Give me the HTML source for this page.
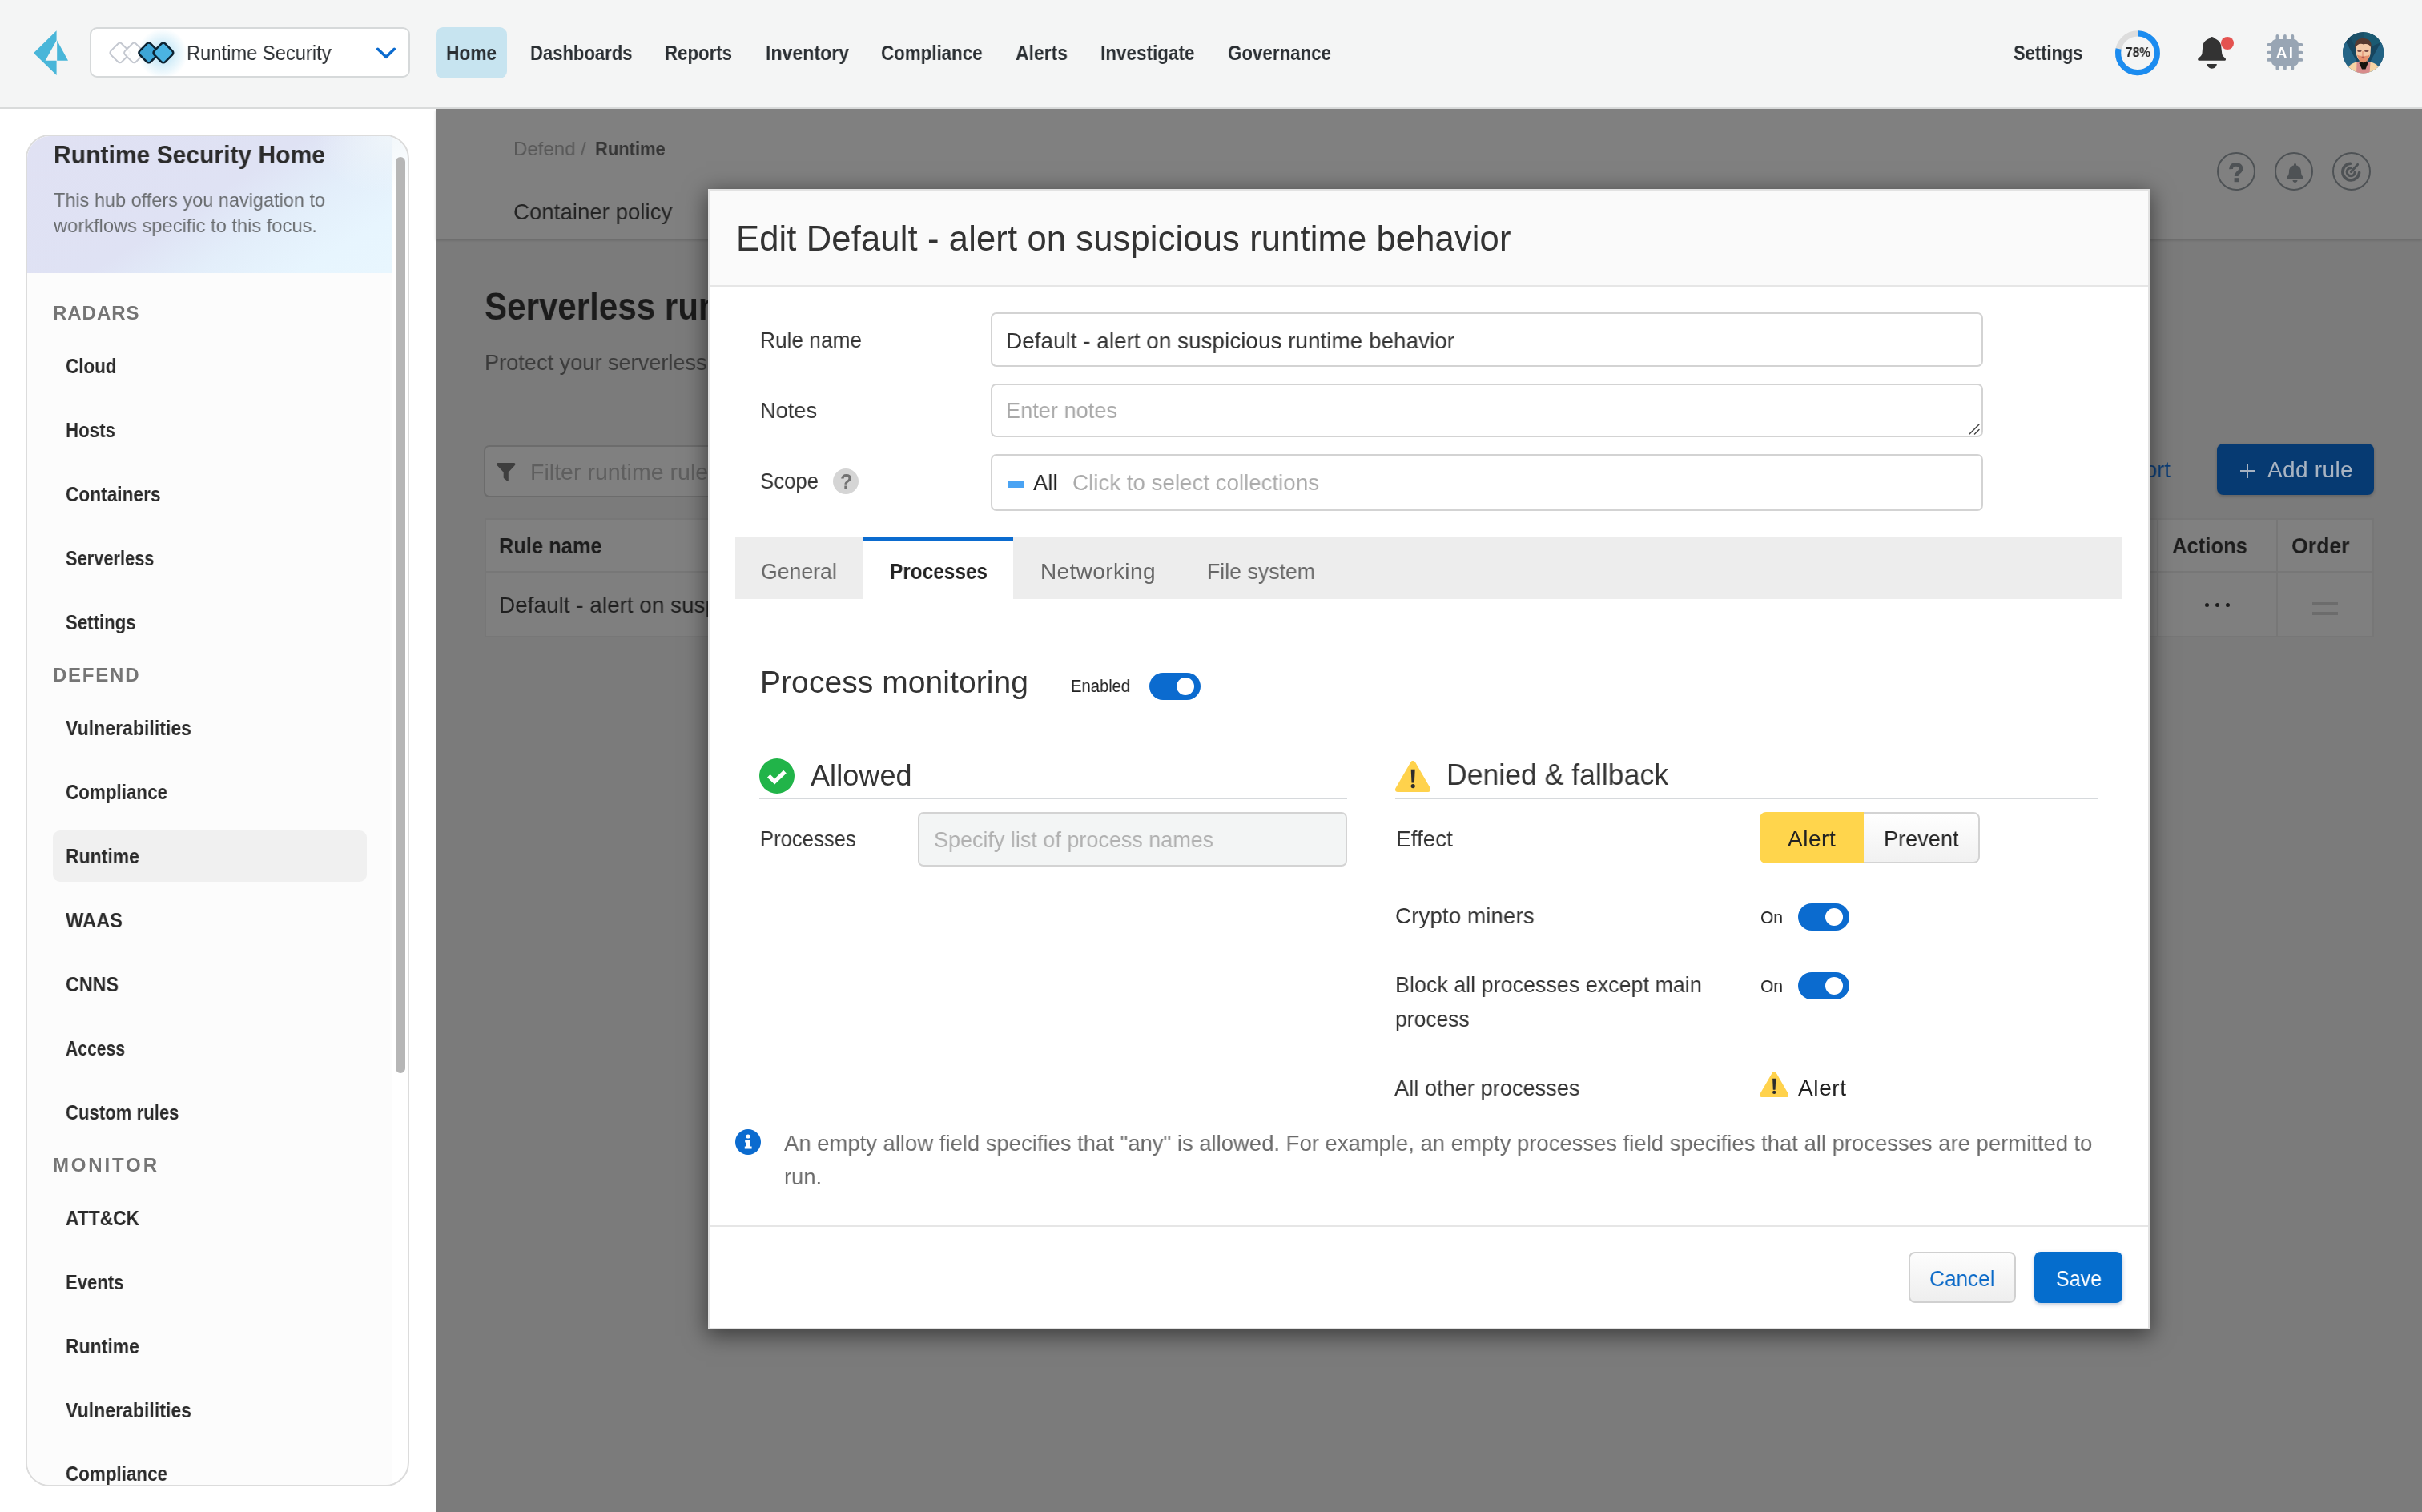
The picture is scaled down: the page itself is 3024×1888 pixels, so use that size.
<!DOCTYPE html>
<html lang="en"><head><meta charset="utf-8"><title>Prisma Cloud - Runtime rule</title>
<style>
html,body{margin:0;padding:0;}
body{width:3024px;height:1888px;overflow:hidden;background:#fff;position:relative;font-family:"Liberation Sans",sans-serif;color:#333;}
.t{position:absolute;white-space:nowrap;display:block;transform-origin:0 0;will-change:transform;}
*{box-sizing:border-box;}
</style></head><body>
<div style="position:absolute;left:0px;top:0px;width:3024px;height:136px;background:#f4f5f5;border-bottom:2px solid #d9dbdb;"></div>
<svg style="position:absolute;left:40px;top:36px;" width="48" height="60" viewBox="0 0 48 60"><polygon points="30.6,2.25 2,30.2 30.6,58.1 30.6,39.8 16.6,39.8 30.6,14.4" fill="#49b6d9"/><polygon points="31.2,14.4 45,39.8 31.2,39.8" fill="#49b6d9"/></svg>
<div style="position:absolute;left:112px;top:34px;width:400px;height:63px;background:#fff;border:2px solid #d6d9da;border-radius:9px;overflow:hidden;"><div style="position:absolute;left:40px;top:-10px;width:100px;height:80px;background:radial-gradient(circle 31px at 49px 41px, rgba(150,212,240,.75) 0%, rgba(172,221,243,.45) 50%, rgba(255,255,255,0) 100%);"></div></div>
<svg style="position:absolute;left:130px;top:46px;" width="100" height="40" viewBox="0 0 100 40"><rect x="10.0" y="10.3" width="19.4" height="19.4" rx="3.4" transform="rotate(45 19.7 20)" fill="#fff" stroke="#c4c8d0" stroke-width="2"/><rect x="27.7" y="10.3" width="19.4" height="19.4" rx="3.4" transform="rotate(45 37.4 20)" fill="rgba(255,255,255,.85)" stroke="#c4c8d0" stroke-width="2"/><rect x="46.0" y="10.3" width="19.4" height="19.4" rx="3.4" transform="rotate(45 55.7 20)" fill="#3ea5d6" stroke="#0c2231" stroke-width="2.6"/><rect x="64.2" y="10.3" width="19.4" height="19.4" rx="3.4" transform="rotate(45 73.9 20)" fill="#4bb3e2" stroke="#0c2231" stroke-width="2.6"/></svg>
<span class="t" style="left:232.50px;top:53.49px;font-size:26px;line-height:26px;color:#2b2f33;transform:scaleX(0.9117);">Runtime Security</span>
<svg style="position:absolute;left:465px;top:55px;" width="34" height="24" viewBox="0 0 34 24"><polyline points="6.7,6.3 17.1,16.3 27.3,6.3" fill="none" stroke="#0b6bcf" stroke-width="3.6" stroke-linecap="round" stroke-linejoin="round"/></svg>
<div style="position:absolute;left:544px;top:34px;width:89px;height:64px;background:#c7e4f0;border-radius:9px;"></div>
<span class="t" style="left:557.00px;top:53.29px;font-size:26px;line-height:26px;color:#2a2f33;font-weight:700;transform:scaleX(0.8724);">Home</span>
<span class="t" style="left:661.50px;top:53.29px;font-size:26px;line-height:26px;color:#2a2f33;font-weight:700;transform:scaleX(0.8484);">Dashboards</span>
<span class="t" style="left:830.00px;top:53.29px;font-size:26px;line-height:26px;color:#2a2f33;font-weight:700;transform:scaleX(0.8553);">Reports</span>
<span class="t" style="left:955.50px;top:53.29px;font-size:26px;line-height:26px;color:#2a2f33;font-weight:700;transform:scaleX(0.8889);">Inventory</span>
<span class="t" style="left:1100.00px;top:53.29px;font-size:26px;line-height:26px;color:#2a2f33;font-weight:700;transform:scaleX(0.8585);">Compliance</span>
<span class="t" style="left:1267.50px;top:53.29px;font-size:26px;line-height:26px;color:#2a2f33;font-weight:700;transform:scaleX(0.8818);">Alerts</span>
<span class="t" style="left:1374.00px;top:53.29px;font-size:26px;line-height:26px;color:#2a2f33;font-weight:700;transform:scaleX(0.8649);">Investigate</span>
<span class="t" style="left:1532.50px;top:53.29px;font-size:26px;line-height:26px;color:#2a2f33;font-weight:700;transform:scaleX(0.8584);">Governance</span>
<span class="t" style="left:2514.00px;top:53.29px;font-size:26px;line-height:26px;color:#2a2f33;font-weight:700;transform:scaleX(0.8433);">Settings</span>
<svg style="position:absolute;left:2637px;top:34px;" width="64" height="64" viewBox="0 0 64 64"><circle cx="32" cy="32.2" r="24.4" fill="none" stroke="#dddddd" stroke-width="7.2"/><circle cx="32" cy="32.2" r="24.4" fill="none" stroke="#1b8cf0" stroke-width="7.2" stroke-dasharray="118.82 153.31" transform="rotate(-88 32 32.2)"/></svg>
<span class="t" style="left:2653.50px;top:57.66px;font-size:16px;line-height:16px;color:#222;font-weight:700;transform:scaleX(0.9675);">78%</span>
<svg style="position:absolute;left:2743.5px;top:46px;" width="36" height="41" viewBox="0 0 36 41"><path d="M17.7,0 C16.4,0 15.4,0.9 14.6,1.9 C9.8,3.8 6.3,7.4 6.2,12.6 L5.5,20.6 C5.3,23.2 3.2,24.9 0.7,26.9 C-0.4,28 0.3,29.8 1.6,29.8 L33.6,29.8 C34.9,29.8 35.6,28 34.5,26.9 C32,24.9 30.4,23.2 30.2,20.6 L29.3,12.6 C29.2,7.4 25.7,3.8 20.9,1.9 C20.1,0.9 19,0 17.7,0 Z" fill="#333"/><path d="M11.6,34 L23.8,34 C23.6,37.4 21,39.7 17.7,39.7 C14.4,39.7 11.8,37.4 11.6,34 Z" fill="#333"/></svg>
<div style="position:absolute;left:2773px;top:46px;width:16px;height:16px;background:#e4524f;border-radius:50%;"></div>
<svg style="position:absolute;left:2828px;top:41px;" width="50" height="50" viewBox="0 0 50 50"><g stroke="#98a5b4" stroke-width="3.8" stroke-linecap="round"><line x1="15.4" y1="4.0" x2="15.4" y2="45.1" /><line x1="4.0" y1="15.0" x2="45.5" y2="15.0"/><line x1="24.9" y1="4.0" x2="24.9" y2="45.1" /><line x1="4.0" y1="24.6" x2="45.5" y2="24.6"/><line x1="34.3" y1="4.0" x2="34.3" y2="45.1" /><line x1="4.0" y1="33.9" x2="45.5" y2="33.9"/></g><rect x="7.9" y="7.9" width="33.9" height="33.5" rx="6" fill="#98a5b4"/></svg>
<span class="t" style="left:2842.00px;top:56.94px;font-size:18.5px;line-height:18.5px;color:#fff;font-weight:700;letter-spacing:2.500px;">AI</span>
<svg style="position:absolute;left:2925px;top:40px;" width="52" height="52" viewBox="0 0 52 52"><defs><clipPath id="avc"><circle cx="25.6" cy="25.8" r="25.6"/></clipPath></defs>
<g clip-path="url(#avc)">
<rect width="52" height="52" fill="#1d5a78"/>
<polygon points="0,8 12,0 40,0 52,8 52,16 30,42 22,42 0,16" fill="#17465f"/>
<polygon points="26,0 44,2 50,12 36,18 27,8" fill="#1a5a72"/>
<polygon points="8,4 26,0 27,8 14,16" fill="#1b5068"/>
<polygon points="0,16 4,12 17,36 8,46 0,40" fill="#246486"/>
<polygon points="52,16 48,12 35,36 44,46 52,40" fill="#226283"/>
<path d="M7,44 C11,38 19,36.5 26,36.5 C33,36.5 41,38 45,44 L45,52 L7,52 Z" fill="#f6d4a4"/>
<polygon points="17.5,38 23,36 29,36 34.5,38 33.5,52 17,52" fill="#d88c8c"/>
<polygon points="20.5,39 24,33 28,33 31.5,39 28.5,46.5 24,46.5" fill="#17130f"/>
<path d="M16.4,18 C16,11 35.4,11 35,18 L34.6,27 C34,32 30,38 25.6,38 C21.4,38 17.4,32 16.8,27 Z" fill="#f4caa8"/>
<path d="M18,28.5 C21,30.5 24,29 25.6,31.5 C27.5,29 31,30.5 33.6,28.5 C32.6,34 29.4,38.2 25.6,38.2 C22,38.2 19,34 18,28.5 Z" fill="#e6906c"/>
<path d="M15.4,20.5 C13.8,11.5 19.5,7.6 25,8 C31.5,7.6 37,11 35.4,20 C34,15.4 30.4,14.2 26,15.4 C21.4,13.8 17.4,15.6 15.4,20.5 Z" fill="#573a30"/>
<ellipse cx="20.9" cy="23.6" rx="2.7" ry="1.5" fill="#7b4a44"/><ellipse cx="29.8" cy="23.6" rx="2.7" ry="1.5" fill="#7b4a44"/>
<path d="M24.2,24 L26.4,24 L27.2,31 L23.6,31 Z" fill="#e8a384"/>
<ellipse cx="25.4" cy="31.8" rx="1.9" ry="1.4" fill="#b2584f"/>
</g></svg>
<div style="position:absolute;left:32px;top:168px;width:479px;height:1688px;border:2px solid #dcdcdc;border-radius:30px;background:#fff;overflow:hidden;"><div style="position:absolute;left:0;top:0;width:456px;height:1684px;background:#fcfcfc;"></div><div style="position:absolute;left:0;top:0;width:456px;height:171px;background:linear-gradient(148deg,#e0e1f3 0%,#dfe2f4 48%,#e3eefa 66%,#e7f5fe 84%,#e8f6fe 100%);"></div><div style="position:absolute;left:330px;top:-30px;width:150px;height:130px;background:radial-gradient(ellipse 90px 70px at 80% 25%, rgba(240,246,250,.85), rgba(240,246,250,0));"></div></div>
<div style="position:absolute;left:494px;top:196px;width:12px;height:1144px;background:#b6b6b6;border-radius:6px;"></div>
<span class="t" style="left:67.00px;top:178.18px;font-size:30.5px;line-height:30.5px;color:#2b2b2b;font-weight:700;transform:scaleX(0.9854);">Runtime Security Home</span>
<span class="t" style="left:67.00px;top:238.38px;font-size:24px;line-height:24px;color:#696c6f;transform:scaleX(0.9785);">This hub offers you navigation to</span>
<span class="t" style="left:67.06px;top:269.68px;font-size:24px;line-height:24px;color:#696c6f;transform:scaleX(0.9864);">workflows specific to this focus.</span>
<div style="position:absolute;left:66px;top:1037px;width:392px;height:64px;background:#f0f0f0;border-radius:9px;"></div>
<span class="t" style="left:66.00px;top:379.28px;font-size:24px;line-height:24px;color:#757575;font-weight:700;letter-spacing:0.968px;">RADARS</span>
<span class="t" style="left:81.50px;top:444.64px;font-size:25px;line-height:25px;color:#2a2a2a;font-weight:700;transform:scaleX(0.8967);">Cloud</span>
<span class="t" style="left:81.50px;top:524.64px;font-size:25px;line-height:25px;color:#2a2a2a;font-weight:700;transform:scaleX(0.8929);">Hosts</span>
<span class="t" style="left:81.50px;top:604.64px;font-size:25px;line-height:25px;color:#2a2a2a;font-weight:700;transform:scaleX(0.9076);">Containers</span>
<span class="t" style="left:81.50px;top:684.64px;font-size:25px;line-height:25px;color:#2a2a2a;font-weight:700;transform:scaleX(0.8735);">Serverless</span>
<span class="t" style="left:81.50px;top:764.64px;font-size:25px;line-height:25px;color:#2a2a2a;font-weight:700;transform:scaleX(0.8872);">Settings</span>
<span class="t" style="left:66.00px;top:831.28px;font-size:24px;line-height:24px;color:#757575;font-weight:700;letter-spacing:1.760px;">DEFEND</span>
<span class="t" style="left:81.50px;top:896.64px;font-size:25px;line-height:25px;color:#2a2a2a;font-weight:700;transform:scaleX(0.9239);">Vulnerabilities</span>
<span class="t" style="left:81.50px;top:976.64px;font-size:25px;line-height:25px;color:#2a2a2a;font-weight:700;transform:scaleX(0.8963);">Compliance</span>
<span class="t" style="left:81.50px;top:1056.64px;font-size:25px;line-height:25px;color:#2a2a2a;font-weight:700;transform:scaleX(0.9200);">Runtime</span>
<span class="t" style="left:81.50px;top:1136.64px;font-size:25px;line-height:25px;color:#2a2a2a;font-weight:700;transform:scaleX(0.9467);">WAAS</span>
<span class="t" style="left:81.50px;top:1216.64px;font-size:25px;line-height:25px;color:#2a2a2a;font-weight:700;transform:scaleX(0.9320);">CNNS</span>
<span class="t" style="left:81.50px;top:1296.64px;font-size:25px;line-height:25px;color:#2a2a2a;font-weight:700;transform:scaleX(0.8451);">Access</span>
<span class="t" style="left:81.50px;top:1376.64px;font-size:25px;line-height:25px;color:#2a2a2a;font-weight:700;transform:scaleX(0.8858);">Custom rules</span>
<span class="t" style="left:66.00px;top:1443.28px;font-size:24px;line-height:24px;color:#757575;font-weight:700;letter-spacing:2.847px;">MONITOR</span>
<span class="t" style="left:81.50px;top:1508.64px;font-size:25px;line-height:25px;color:#2a2a2a;font-weight:700;transform:scaleX(0.9115);">ATT&amp;CK</span>
<span class="t" style="left:81.50px;top:1588.64px;font-size:25px;line-height:25px;color:#2a2a2a;font-weight:700;transform:scaleX(0.8841);">Events</span>
<span class="t" style="left:81.50px;top:1668.64px;font-size:25px;line-height:25px;color:#2a2a2a;font-weight:700;transform:scaleX(0.9200);">Runtime</span>
<span class="t" style="left:81.50px;top:1748.64px;font-size:25px;line-height:25px;color:#2a2a2a;font-weight:700;transform:scaleX(0.9239);">Vulnerabilities</span>
<div style="position:absolute;left:34px;top:1800px;width:456px;height:54px;overflow:hidden;">
<span class="t" style="left:47.50px;top:27.64px;font-size:25px;line-height:25px;color:#2a2a2a;font-weight:700;transform:scaleX(0.8963);">Compliance</span>
</div>
<div style="position:absolute;left:544px;top:136px;width:2480px;height:1752px;background:#7b7b7b;"></div>
<div style="position:absolute;left:544px;top:136px;width:2480px;height:162px;background:#808080;box-shadow:0 2px 3px rgba(0,0,0,.17);"></div>
<span class="t" style="left:641.00px;top:174.26px;font-size:24.5px;line-height:24.5px;color:#575757;transform:scaleX(0.9798);">Defend /</span>
<span class="t" style="left:742.50px;top:174.26px;font-size:24.5px;line-height:24.5px;color:#363636;font-weight:700;transform:scaleX(0.8959);">Runtime</span>
<span class="t" style="left:641.00px;top:250.80px;font-size:28px;line-height:28px;color:#232323;transform:scaleX(0.9877);">Container policy</span>
<div style="position:absolute;left:2768px;top:190px;width:48px;height:48px;border:2px solid #4e5255;border-radius:50%;"></div>
<div style="position:absolute;left:2840px;top:190px;width:48px;height:48px;border:2px solid #4e5255;border-radius:50%;"></div>
<div style="position:absolute;left:2912px;top:190px;width:48px;height:48px;border:2px solid #4e5255;border-radius:50%;"></div>
<svg style="position:absolute;left:2782.8px;top:202.8px;" width="18" height="25" viewBox="0 0 18 25"><path d="M2.6,8.2 C2.3,4 5.6,2.4 8.9,2.4 C12.6,2.4 15.2,4.4 15.2,7.6 C15.2,11.8 9.2,12 9.2,17" fill="none" stroke="#4e5255" stroke-width="4.8"/><rect x="6.6" y="19.2" width="5.4" height="5" fill="#4e5255"/></svg>
<svg style="position:absolute;left:2854.5px;top:203px;" width="21" height="26" viewBox="0 0 448 512"><path fill="#4e5255" d="M224 512c35.32 0 63.97-28.65 63.97-64H160.03c0 35.35 28.65 64 63.97 64zm215.39-149.71c-19.32-20.76-55.47-51.99-55.47-154.29 0-77.7-54.48-139.9-127.94-155.16V32c0-17.67-14.32-32-31.98-32s-31.98 14.33-31.98 32v20.84C118.56 68.1 64.08 130.3 64.08 208c0 102.3-36.15 133.53-55.47 154.29-6 6.45-8.66 14.16-8.61 21.71.11 16.4 12.98 32 32.1 32h383.8c19.12 0 32-15.6 32.1-32 .05-7.55-2.61-15.27-8.61-21.71z"/></svg>
<svg style="position:absolute;left:2920px;top:198px;" width="32" height="32" viewBox="0 0 32 32"><g fill="none" stroke="#4e5255" stroke-linecap="round"><path d="M25.6,17.6 A10.4,10.4 0 1 1 14.6,6.2" stroke-width="3.6"/><path d="M20.2,16.8 A5,5 0 1 1 15.2,11.6" stroke-width="3.2"/><line x1="15.4" y1="16.4" x2="23.6" y2="7.4" stroke-width="3"/><circle cx="15.2" cy="16.6" r="1.2" fill="#4e5255" stroke="none"/></g></svg>
<span class="t" style="left:605.40px;top:359.07px;font-size:48px;line-height:48px;color:#1b1b1b;font-weight:700;transform:scaleX(0.8774);">Serverless runtime policy</span>
<span class="t" style="left:605.40px;top:439.10px;font-size:28px;line-height:28px;color:#3b3b3b;transform:scaleX(0.9696);">Protect your serverless functions</span>
<div style="position:absolute;left:604px;top:556px;width:2000px;height:65px;border:2px solid #6c6c6c;border-radius:7px;background:#808080;"></div>
<svg style="position:absolute;left:620px;top:578px;" width="24" height="24" viewBox="0 0 24 24"><path fill="#3e3e3e" d="M0,1.6 Q0,0 1.6,0 L21.9,0 Q23.5,0 23.5,1.6 Q23.5,2.4 22.9,3.1 L14.8,11.8 L14.8,21.6 Q14.8,23.6 13.2,22.4 L9.5,19.6 Q8.7,19 8.7,18 L8.7,11.8 L0.6,3.1 Q0,2.4 0,1.6 Z"/></svg>
<span class="t" style="left:661.80px;top:575.80px;font-size:28px;line-height:28px;color:#5f5f5f;transform:scaleX(1.02);">Filter runtime rules</span>
<span class="t" style="left:2632.00px;top:573.30px;font-size:28px;line-height:28px;color:#0a3d78;transform:scaleX(0.9602);">Export</span>
<div style="position:absolute;left:2768px;top:554px;width:196px;height:64px;background:#063a72;border-radius:8px;box-shadow:0 2px 4px rgba(0,0,0,.2);"></div>
<div style="position:absolute;left:2797px;top:586.7px;width:18.2px;height:2.4px;background:#a7b2c1;"></div>
<div style="position:absolute;left:2804.9px;top:578.8px;width:2.4px;height:18.2px;background:#a7b2c1;"></div>
<span class="t" style="left:2830.50px;top:573.30px;font-size:28px;line-height:28px;color:#a9b4c2;letter-spacing:0.314px;">Add rule</span>
<div style="position:absolute;left:605px;top:647px;width:2359px;height:149px;border:2px solid #777777;background:#7f7f7f;"></div>
<div style="position:absolute;left:605px;top:647px;width:2359px;height:68px;border:2px solid #777777;background:#808080;"></div>
<div style="position:absolute;left:2693px;top:647px;width:2px;height:149px;background:#777777;"></div>
<div style="position:absolute;left:2842px;top:647px;width:2px;height:149px;background:#777777;"></div>
<span class="t" style="left:623.00px;top:668.10px;font-size:28px;line-height:28px;color:#1c1c1c;font-weight:700;transform:scaleX(0.9081);">Rule name</span>
<span class="t" style="left:623.00px;top:741.70px;font-size:28px;line-height:28px;color:#1f1f1f;transform:scaleX(.997);">Default - alert on suspicious runtime behavior</span>
<span class="t" style="left:2712.00px;top:667.80px;font-size:28px;line-height:28px;color:#1c1c1c;font-weight:700;transform:scaleX(0.9154);">Actions</span>
<span class="t" style="left:2860.50px;top:667.80px;font-size:28px;line-height:28px;color:#1c1c1c;font-weight:700;transform:scaleX(0.9511);">Order</span>
<div style="position:absolute;left:2752.5px;top:752.5px;width:5px;height:5px;background:#1c1c1c;border-radius:50%;"></div>
<div style="position:absolute;left:2765.5px;top:752.5px;width:5px;height:5px;background:#1c1c1c;border-radius:50%;"></div>
<div style="position:absolute;left:2778.5px;top:752.5px;width:5px;height:5px;background:#1c1c1c;border-radius:50%;"></div>
<div style="position:absolute;left:2887px;top:752.2px;width:32px;height:4.2px;background:#6c6c6c;"></div>
<div style="position:absolute;left:2887px;top:764.1px;width:32px;height:4.2px;background:#6c6c6c;"></div>
<div style="position:absolute;left:884px;top:236px;width:1800px;height:1424px;background:#fff;border:2px solid #e2e2e2;box-shadow:0 6px 26px 2px rgba(0,0,0,.5);"></div>
<div style="position:absolute;left:886px;top:238px;width:1796px;height:120px;background:#fafafa;border-bottom:2px solid #e6e6e6;"></div>
<span class="t" style="left:919.00px;top:277.18px;font-size:43.5px;line-height:43.5px;color:#333;letter-spacing:0.151px;">Edit Default - alert on suspicious runtime behavior</span>
<span class="t" style="left:949.00px;top:410.90px;font-size:28px;line-height:28px;color:#333;transform:scaleX(0.9381);">Rule name</span>
<div style="position:absolute;left:1237px;top:390px;width:1239px;height:68px;background:#fff;border:2px solid #d3d3d3;border-radius:7px;"></div>
<span class="t" style="left:1256.00px;top:411.70px;font-size:28px;line-height:28px;color:#333;transform:scaleX(0.9968);">Default - alert on suspicious runtime behavior</span>
<span class="t" style="left:949.00px;top:498.70px;font-size:28px;line-height:28px;color:#333;transform:scaleX(0.9706);">Notes</span>
<div style="position:absolute;left:1237px;top:478.5px;width:1239px;height:67.5px;background:#fff;border:2px solid #d3d3d3;border-radius:7px;"></div>
<span class="t" style="left:1256.00px;top:499.10px;font-size:28px;line-height:28px;color:#a9a9a9;transform:scaleX(0.9705);">Enter notes</span>
<svg style="position:absolute;left:2457.1px;top:527.7px;" width="16" height="16" viewBox="0 0 16 16"><g stroke="#444" stroke-width="1.5" stroke-linecap="round"><line x1="2" y1="14" x2="14" y2="2"/><line x1="8.5" y1="14" x2="14" y2="8.5"/></g></svg>
<span class="t" style="left:949.00px;top:587.30px;font-size:28px;line-height:28px;color:#333;transform:scaleX(0.9196);">Scope</span>
<div style="position:absolute;left:1039.5px;top:585px;width:32px;height:32px;background:#d5d5d5;border-radius:50%;"></div>
<span class="t" style="left:1049.20px;top:589.04px;font-size:25px;line-height:25px;color:#727272;font-weight:700;">?</span>
<div style="position:absolute;left:1237px;top:566.5px;width:1239px;height:71px;background:#fff;border:2px solid #d3d3d3;border-radius:7px;"></div>
<div style="position:absolute;left:1259px;top:599.5px;width:20px;height:9.5px;background:#4aa3f3;"></div>
<span class="t" style="left:1289.50px;top:589.30px;font-size:28px;line-height:28px;color:#222;transform:scaleX(0.9791);">All</span>
<span class="t" style="left:1339.00px;top:589.30px;font-size:28px;line-height:28px;color:#ababab;transform:scaleX(0.9897);">Click to select collections</span>
<div style="position:absolute;left:918px;top:669.5px;width:1732px;height:78.5px;background:#ededed;"></div>
<div style="position:absolute;left:1078px;top:669.5px;width:187px;height:78.5px;background:#fff;border-top:5.5px solid #0b6bcf;"></div>
<span class="t" style="left:950.20px;top:700.10px;font-size:28px;line-height:28px;color:#666;transform:scaleX(0.9517);">General</span>
<span class="t" style="left:1111.00px;top:700.10px;font-size:28px;line-height:28px;color:#222;font-weight:700;transform:scaleX(0.8706);">Processes</span>
<span class="t" style="left:1298.50px;top:700.10px;font-size:28px;line-height:28px;color:#666;letter-spacing:0.381px;">Networking</span>
<span class="t" style="left:1507.00px;top:700.10px;font-size:28px;line-height:28px;color:#666;transform:scaleX(0.9533);">File system</span>
<span class="t" style="left:948.80px;top:831.99px;font-size:39px;line-height:39px;color:#333;letter-spacing:0.062px;">Process monitoring</span>
<span class="t" style="left:1336.50px;top:846.08px;font-size:22px;line-height:22px;color:#222;transform:scaleX(0.9165);">Enabled</span>
<div style="position:absolute;left:1435px;top:840px;width:64px;height:34px;background:#0b6bcf;border-radius:17px;"></div>
<div style="position:absolute;left:1468.9px;top:845.7px;width:22.6px;height:22.6px;background:#fff;border-radius:50%;"></div>
<svg style="position:absolute;left:948px;top:947px;" width="44" height="44" viewBox="0 0 44 44"><circle cx="22" cy="22" r="22" fill="#21b449"/><polyline points="11.8,21.8 19.2,29 32,16.6" fill="none" stroke="#fff" stroke-width="5.2" stroke-linejoin="miter"/></svg>
<span class="t" style="left:1012.00px;top:950.53px;font-size:36px;line-height:36px;color:#333;letter-spacing:0.085px;">Allowed</span>
<div style="position:absolute;left:948px;top:996px;width:734px;height:2px;background:#d6d9dc;"></div>
<span class="t" style="left:949.00px;top:1034.30px;font-size:28px;line-height:28px;color:#333;transform:scaleX(0.9151);">Processes</span>
<div style="position:absolute;left:1146px;top:1014px;width:536px;height:68px;background:#f3f5f5;border:2px solid #d3d3d3;border-radius:7px;"></div>
<span class="t" style="left:1165.50px;top:1034.80px;font-size:28px;line-height:28px;color:#b0b0b0;transform:scaleX(0.9630);">Specify list of process names</span>
<svg style="position:absolute;left:1742px;top:949.7px;" width="44.4" height="39.0" viewBox="0 0 44.4 39"><polygon points="22.2,3.2 41.2,35.8 3.2,35.8" fill="#ffd24c" stroke="#ffd24c" stroke-width="6.4" stroke-linejoin="round"/><path d="M19.7,10.8 H24.7 L23.9,27.6 H20.5 Z" fill="#2d2d2d"/><circle cx="22.2" cy="31.6" r="2.6" fill="#2d2d2d"/></svg>
<span class="t" style="left:1806.30px;top:950.03px;font-size:36px;line-height:36px;color:#333;transform:scaleX(0.9887);">Denied &amp; fallback</span>
<div style="position:absolute;left:1742px;top:996px;width:878px;height:2px;background:#d6d9dc;"></div>
<span class="t" style="left:1742.60px;top:1033.90px;font-size:28px;line-height:28px;color:#333;transform:scaleX(0.9965);">Effect</span>
<div style="position:absolute;left:2197px;top:1014px;width:131px;height:64px;background:#ffd54c;border-radius:8px 0 0 8px;"></div>
<div style="position:absolute;left:2327px;top:1014px;width:145px;height:64px;background:linear-gradient(#fff,#f1f1f1);border:2px solid #d3d3d3;border-left:none;border-radius:0 8px 8px 0;"></div>
<span class="t" style="left:2232.00px;top:1034.00px;font-size:28px;line-height:28px;color:#222;letter-spacing:0.540px;">Alert</span>
<span class="t" style="left:2351.50px;top:1034.00px;font-size:28px;line-height:28px;color:#222;transform:scaleX(0.9686);">Prevent</span>
<span class="t" style="left:1741.80px;top:1130.30px;font-size:28px;line-height:28px;color:#333;transform:scaleX(0.9966);">Crypto miners</span>
<span class="t" style="left:2197.50px;top:1134.68px;font-size:22px;line-height:22px;color:#222;transform:scaleX(0.9568);">On</span>
<div style="position:absolute;left:2245px;top:1128px;width:64px;height:34px;background:#0b6bcf;border-radius:17px;"></div>
<div style="position:absolute;left:2278.9px;top:1133.7px;width:22.6px;height:22.6px;background:#fff;border-radius:50%;"></div>
<span class="t" style="left:1742.20px;top:1216.30px;font-size:28px;line-height:28px;color:#333;transform:scaleX(0.9607);">Block all processes except main</span>
<span class="t" style="left:1741.80px;top:1258.70px;font-size:28px;line-height:28px;color:#333;transform:scaleX(0.9452);">process</span>
<span class="t" style="left:2197.50px;top:1221.38px;font-size:22px;line-height:22px;color:#222;transform:scaleX(0.9568);">On</span>
<div style="position:absolute;left:2245px;top:1214px;width:64px;height:34px;background:#0b6bcf;border-radius:17px;"></div>
<div style="position:absolute;left:2278.9px;top:1219.7px;width:22.6px;height:22.6px;background:#fff;border-radius:50%;"></div>
<span class="t" style="left:1741.40px;top:1344.80px;font-size:28px;line-height:28px;color:#333;transform:scaleX(0.9725);">All other processes</span>
<svg style="position:absolute;left:2196.7px;top:1337.7px;" width="36.4" height="32.0" viewBox="0 0 44.4 39"><polygon points="22.2,3.2 41.2,35.8 3.2,35.8" fill="#ffd24c" stroke="#ffd24c" stroke-width="6.4" stroke-linejoin="round"/><path d="M19.7,10.8 H24.7 L23.9,27.6 H20.5 Z" fill="#2d2d2d"/><circle cx="22.2" cy="31.6" r="2.6" fill="#2d2d2d"/></svg>
<span class="t" style="left:2245.00px;top:1344.50px;font-size:28px;line-height:28px;color:#222;letter-spacing:0.615px;">Alert</span>
<svg style="position:absolute;left:918px;top:1410px;" width="32" height="32" viewBox="0 0 32 32"><circle cx="16" cy="16" r="16" fill="#0b6bcf"/><circle cx="16" cy="9" r="2.6" fill="#fff"/><path d="M12.2,13.4 H18.6 V21.6 H20.6 V24.6 H11.8 V21.6 H13.8 V16.4 H12.2 Z" fill="#fff"/></svg>
<span class="t" style="left:978.50px;top:1414.10px;font-size:28px;line-height:28px;color:#6a6a6a;transform:scaleX(0.9802);">An empty allow field specifies that &quot;any&quot; is allowed. For example, an empty processes field specifies that all processes are permitted to</span>
<span class="t" style="left:978.50px;top:1455.80px;font-size:28px;line-height:28px;color:#6a6a6a;transform:scaleX(0.9745);">run.</span>
<div style="position:absolute;left:886px;top:1529.5px;width:1796px;height:2px;background:#e6e6e6;"></div>
<div style="position:absolute;left:2382.5px;top:1563px;width:134px;height:64px;background:linear-gradient(#fdfdfd,#eeeeee);border:2px solid #d0d0d0;border-radius:8px;"></div>
<span class="t" style="left:2409.00px;top:1582.80px;font-size:28px;line-height:28px;color:#0a69c7;transform:scaleX(0.9352);">Cancel</span>
<div style="position:absolute;left:2540px;top:1563px;width:110px;height:64px;background:#056dcd;border-radius:8px;box-shadow:0 2px 5px rgba(0,40,100,.25);"></div>
<span class="t" style="left:2566.60px;top:1582.80px;font-size:28px;line-height:28px;color:#fff;transform:scaleX(0.8944);">Save</span>
</body></html>
